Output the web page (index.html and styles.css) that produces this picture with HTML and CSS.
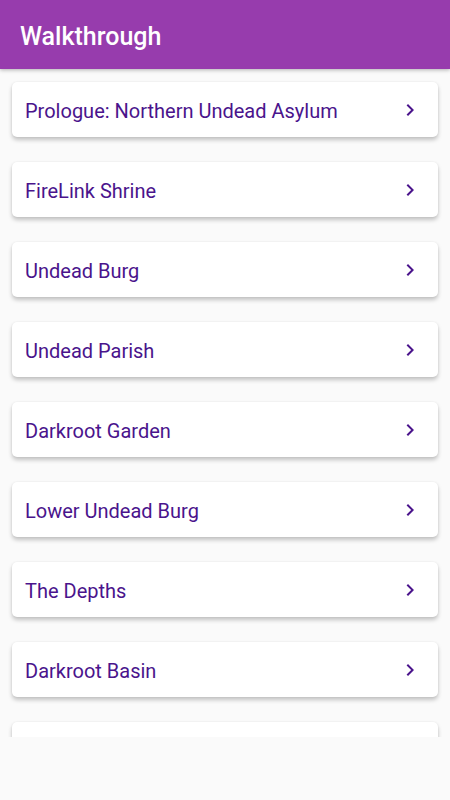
FILE: index.html
```html
<!DOCTYPE html>
<html lang="en">

<head>
    <meta charset="UTF-8">
    <meta name="viewport" content="width=device-width, initial-scale=1.0">
    <title>Walkthrough</title>
    <link rel="stylesheet" href="styles.css">
</head>

<body>
    <header class="app-bar">
        <h1>Walkthrough</h1>
    </header>

    <div class="list">
        <div class="card"><span>Prologue: Northern Undead Asylum</span><svg viewBox="0 0 24 24"><path d="M8.59 16.59L13.17 12 8.59 7.41 10 6l6 6-6 6z"/></svg></div>
        <div class="card"><span>FireLink Shrine</span><svg viewBox="0 0 24 24"><path d="M8.59 16.59L13.17 12 8.59 7.41 10 6l6 6-6 6z"/></svg></div>
        <div class="card"><span>Undead Burg</span><svg viewBox="0 0 24 24"><path d="M8.59 16.59L13.17 12 8.59 7.41 10 6l6 6-6 6z"/></svg></div>
        <div class="card"><span>Undead Parish</span><svg viewBox="0 0 24 24"><path d="M8.59 16.59L13.17 12 8.59 7.41 10 6l6 6-6 6z"/></svg></div>
        <div class="card"><span>Darkroot Garden</span><svg viewBox="0 0 24 24"><path d="M8.59 16.59L13.17 12 8.59 7.41 10 6l6 6-6 6z"/></svg></div>
        <div class="card"><span>Lower Undead Burg</span><svg viewBox="0 0 24 24"><path d="M8.59 16.59L13.17 12 8.59 7.41 10 6l6 6-6 6z"/></svg></div>
        <div class="card"><span>The Depths</span><svg viewBox="0 0 24 24"><path d="M8.59 16.59L13.17 12 8.59 7.41 10 6l6 6-6 6z"/></svg></div>
        <div class="card"><span>Darkroot Basin</span><svg viewBox="0 0 24 24"><path d="M8.59 16.59L13.17 12 8.59 7.41 10 6l6 6-6 6z"/></svg></div>
        <div class="card"></div>
    </div>
</body>
</html>
```

FILE: styles.css
```css
body {
    margin: 0;
    background-color: #fafafa;
    font-family: Roboto, "Liberation Sans", sans-serif;
}

.app-bar {
    box-sizing: border-box;
    height: 69px;
    background-color: #973cad;
    display: flex;
    align-items: center;
    padding: 4px 20px 0 20px;
    box-shadow: 0 1px 4px rgba(0, 0, 0, 0.3);
    position: relative;
    z-index: 1;
}

.app-bar h1 {
    margin: 0;
    color: white;
    font-size: 25px;
    font-weight: 500;
}

.list {
    box-sizing: border-box;
    height: 668px;
    overflow: hidden;
    padding: 13px 12px 0 12px;
    display: flex;
    flex-direction: column;
    gap: 25px;
}

.card {
    flex-shrink: 0;
    height: 55px;
    background-color: white;
    border-radius: 5px;
    box-shadow: 0 3px 4px rgba(0, 0, 0, 0.22), 0 0 2px rgba(0, 0, 0, 0.08);
    display: flex;
    align-items: center;
    justify-content: space-between;
    padding: 0 16px 0 13px;
}

.card span {
    color: #4a148c;
    font-size: 20px;
    padding-top: 3px;
}

.card svg {
    width: 24px;
    height: 24px;
    fill: #4a148c;
}
```
